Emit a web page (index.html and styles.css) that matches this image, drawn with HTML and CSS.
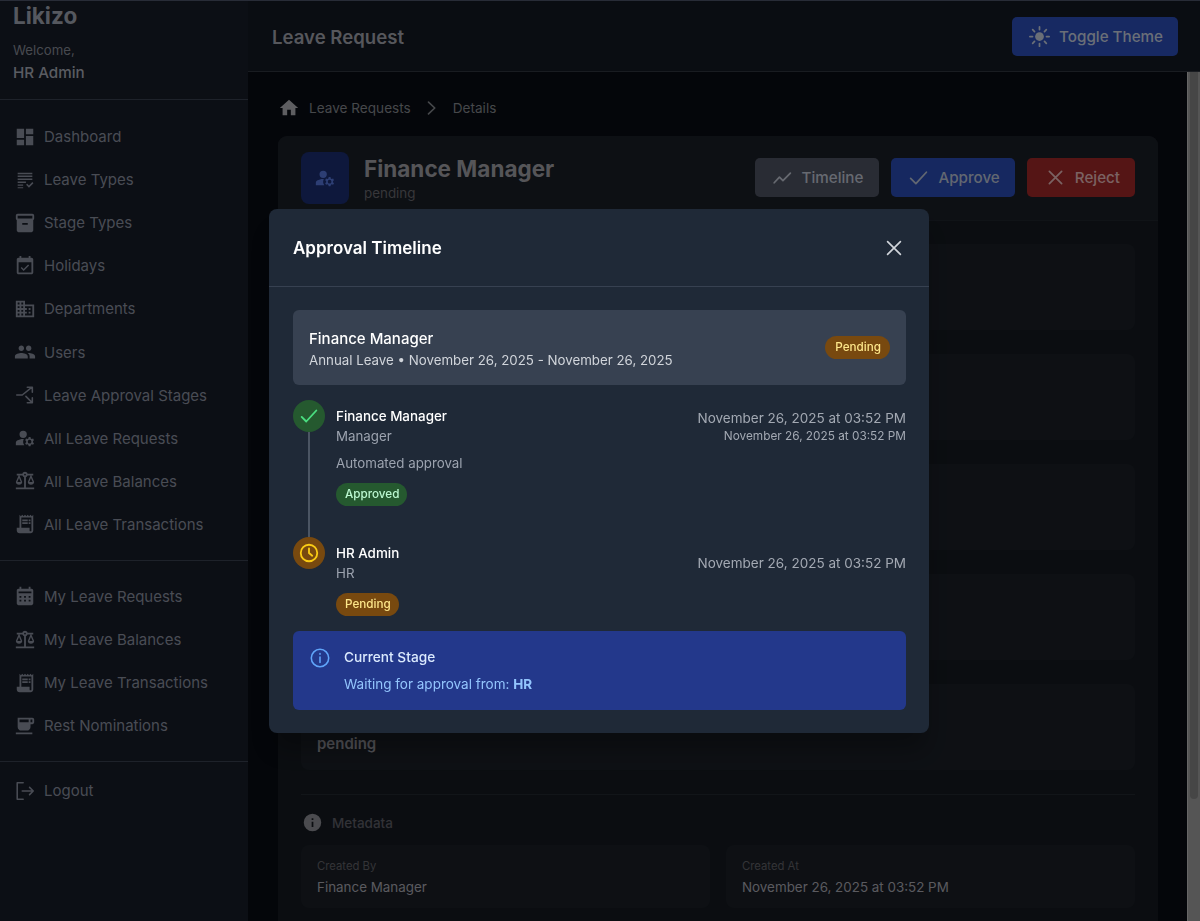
FILE: index.html
```html
<!DOCTYPE html>
<html lang="en">
<head>
<meta charset="utf-8">
<title>Likizo - Leave Request</title>
<link rel="stylesheet" href="styles.css">
</head>
<body>
<div class="app">
  <aside class="sidebar">
    <div class="brand">
      <div class="logo">Likizo</div>
      <div class="welcome">Welcome,</div>
      <div class="who">HR Admin</div>
    </div>
    <nav class="nav-group first">
      <a class="nav"><svg viewBox="0 0 24 24"><path d="M3 13h8V3H3zm0 8h8v-6H3zm10 0h8V11h-8zm0-18v6h8V3z"/></svg>Dashboard</a>
      <a class="nav"><svg viewBox="0 0 24 24"><path d="M4 4h16v1.600H4zm0 3.200h16v1.600H4zm0 3.200h16V12H4zm0 3.200h9v1.600H4zm0 3.200h6v1.600H4zm0 3.100h6V21H4zm9.200-2.600 1.200-1.200 1.900 1.900 3.700-3.700 1.200 1.200-4.900 4.900z"/></svg>Leave Types</a>
      <a class="nav"><svg viewBox="0 0 24 24"><path d="M20 2H4c-1 0-2 .9-2 2v3c0 .7.4 1.400 1 1.700V20c0 1.100 1.100 2 2 2h14c.9 0 2-.9 2-2V8.700c.6-.3 1-1 1-1.700V4c0-1.100-1-2-2-2zm-5 12H9v-2h6zm5-7H4V4h16z"/></svg>Stage Types</a>
      <a class="nav"><svg viewBox="0 0 24 24"><path d="M16.500 11.500 15.400 10.400l-4.900 4.900-2.100-2.100-1.100 1.100 3.200 3.200zM19 3h-1V1h-2v2H8V1H6v2H5c-1.100 0-2 .9-2 2v14c0 1.100.9 2 2 2h14c1.100 0 2-.9 2-2V5c0-1.100-.9-2-2-2zm0 16H5V8h14z"/></svg>Holidays</a>
      <a class="nav"><svg viewBox="0 0 24 24"><path d="M12 7V3H2v18h20V7zM6 19H4v-2h2zm0-4H4v-2h2zm0-4H4V9h2zm0-4H4V5h2zm4 12H8v-2h2zm0-4H8v-2h2zm0-4H8V9h2zm0-4H8V5h2zm10 12h-8v-2h2v-2h-2v-2h2v-2h-2V9h8zm-2-8h-2v2h2zm0 4h-2v2h2z"/></svg>Departments</a>
      <a class="nav"><svg viewBox="0 0 24 24"><path d="M16 11c1.660 0 2.990-1.340 2.990-3S17.660 5 16 5s-3 1.340-3 3 1.340 3 3 3zm-8 0c1.660 0 2.990-1.340 2.990-3S9.660 5 8 5 5 6.340 5 8s1.340 3 3 3zm0 2c-2.330 0-7 1.170-7 3.500V19h14v-2.500C15 14.170 10.330 13 8 13zm8 0c-.290 0-.620.020-.970.050 1.160.840 1.970 1.970 1.970 3.450V19h6v-2.500c0-2.330-4.670-3.500-7-3.500z"/></svg>Users</a>
      <a class="nav"><svg viewBox="0 0 24 24"><path class="line thin" d="M3 12h6l10-8M14.500 3.500H20V9M13 13.500l6.500 6.500M20 15v5.500h-5.500"/></svg>Leave Approval Stages</a>
      <a class="nav"><svg viewBox="0 0 24 24"><path d="M10 4a4 4 0 1 0 0 8 4 4 0 0 0 0-8zM10.700 13.020C10.470 13.010 10.240 13 10 13c-2.420 0-4.680.670-6.610 1.820C2.510 15.340 2 16.320 2 17.350V20h9.260a6.960 6.960 0 0 1-.56-6.980zM20.750 16c0-.220-.030-.420-.060-.630l1.140-1.010-1-1.730-1.450.490c-.320-.270-.680-.480-1.080-.630L18 11h-2l-.300 1.490c-.400.150-.760.360-1.080.630l-1.450-.490-1 1.730 1.140 1.010c-.030.210-.060.410-.060.630s.030.420.060.630l-1.140 1.010 1 1.730 1.450-.490c.320.270.680.480 1.080.630L16 21h2l.300-1.490c.400-.150.760-.360 1.080-.630l1.450.490 1-1.730-1.140-1.010c.030-.210.060-.410.060-.630zM17 18a2 2 0 1 1 0-4 2 2 0 0 1 0 4z"/></svg>All Leave Requests</a>
      <a class="nav"><svg viewBox="0 0 24 24"><path d="M13 7.830c.850-.300 1.530-.980 1.830-1.830H18l-3 7c0 1.660 1.570 3 3.500 3s3.500-1.340 3.500-3l-3-7h2V4h-6.170c-.410-1.170-1.520-2-2.830-2s-2.420.830-2.830 2H3v2h2l-3 7c0 1.660 1.570 3 3.500 3S9 14.660 9 13L6 6h3.170c.300.850.980 1.530 1.830 1.830V19H2v2h20v-2h-9zM20.370 13h-3.740l1.870-4.370zm-13 0H3.630L5.500 8.630zM12 6a1 1 0 1 1 0-2 1 1 0 0 1 0 2z"/></svg>All Leave Balances</a>
      <a class="nav"><svg viewBox="0 0 24 24"><path d="M19.500 3.500 18 2l-1.500 1.500L15 2l-1.500 1.500L12 2l-1.500 1.500L9 2 7.500 3.500 6 2v14H3v3c0 1.660 1.340 3 3 3h12c1.660 0 3-1.340 3-3V2zM19 19c0 .550-.450 1-1 1s-1-.450-1-1v-3H8V5h11zM9 7h6v2H9zm7 0h2v2h-2zm-7 3h6v2H9zm7 0h2v2h-2z"/></svg>All Leave Transactions</a>
    </nav>
    <nav class="nav-group">
      <a class="nav"><svg viewBox="0 0 24 24"><path d="M19 4h-1V2h-2v2H8V2H6v2H5c-1.100 0-2 .9-2 2v14c0 1.100.9 2 2 2h14c1.100 0 2-.9 2-2V6c0-1.100-.9-2-2-2zM8 18H6v-2h2zm0-4H6v-2h2zm5 4h-2v-2h2zm0-4h-2v-2h2zm5 4h-2v-2h2zm0-4h-2v-2h2zm1-5H5V7h14z"/></svg>My Leave Requests</a>
      <a class="nav"><svg viewBox="0 0 24 24"><path d="M13 7.830c.850-.300 1.530-.980 1.830-1.830H18l-3 7c0 1.660 1.570 3 3.500 3s3.500-1.340 3.500-3l-3-7h2V4h-6.170c-.410-1.170-1.520-2-2.830-2s-2.420.830-2.830 2H3v2h2l-3 7c0 1.660 1.570 3 3.500 3S9 14.660 9 13L6 6h3.170c.300.850.980 1.530 1.830 1.830V19H2v2h20v-2h-9zM20.370 13h-3.740l1.870-4.370zm-13 0H3.630L5.500 8.630zM12 6a1 1 0 1 1 0-2 1 1 0 0 1 0 2z"/></svg>My Leave Balances</a>
      <a class="nav"><svg viewBox="0 0 24 24"><path d="M19.500 3.500 18 2l-1.500 1.500L15 2l-1.500 1.500L12 2l-1.500 1.500L9 2 7.500 3.500 6 2v14H3v3c0 1.660 1.340 3 3 3h12c1.660 0 3-1.340 3-3V2zM19 19c0 .550-.450 1-1 1s-1-.450-1-1v-3H8V5h11zM9 7h6v2H9zm7 0h2v2h-2zm-7 3h6v2H9zm7 0h2v2h-2z"/></svg>My Leave Transactions</a>
      <a class="nav"><svg viewBox="0 0 24 24"><path d="M2 21h18v-2H2zM20 3H4v10c0 2.210 1.790 4 4 4h6c2.210 0 4-1.790 4-4v-3h2c1.110 0 2-.9 2-2V5c0-1.110-.89-2-2-2zm0 5h-2V5h2zM6 5h10v3H6z"/></svg>Rest Nominations</a>
    </nav>
    <nav class="nav-group last">
      <a class="nav"><svg viewBox="0 0 24 24"><path class="line thin" d="M10 3H3.500v18H10M9 12h12M17 8l4 4-4 4"/></svg>Logout</a>
    </nav>
  </aside>
  <div class="workspace">
    <header class="topbar">
      <h1 class="page-title">Leave Request</h1>
      <button class="btn btn-theme"><svg viewBox="0 0 24 24"><circle cx="12" cy="12" r="5"/><path class="line" d="M12 1v3M12 20v3M1 12h3M20 12h3M4.200 4.200l2.100 2.100M17.700 17.700l2.100 2.100M4.200 19.800l2.100-2.100M17.700 6.300l2.100-2.100"/></svg>Toggle Theme</button>
    </header>
    <div class="content-row">
      <main class="content">
        <div class="crumbs">
          <svg class="home" viewBox="0 0 24 24"><path d="M10 20v-6h4v6h5v-8h3L12 3 2 12h3v8z"/></svg>
          <span>Leave Requests</span>
          <svg class="chev" viewBox="0 0 24 24"><path class="line" d="m9 5 7.500 7-7.500 7"/></svg>
          <span>Details</span>
        </div>
        <section class="card">
          <div class="card-head">
            <div class="avatar"><svg viewBox="0 0 24 24"><path d="M10 4a4 4 0 1 0 0 8 4 4 0 0 0 0-8zM10.700 13.020C10.470 13.010 10.240 13 10 13c-2.420 0-4.680.670-6.610 1.820C2.510 15.340 2 16.320 2 17.350V20h9.260a6.960 6.960 0 0 1-.56-6.980zM20.750 16c0-.220-.030-.420-.060-.630l1.140-1.010-1-1.730-1.450.490c-.320-.270-.680-.480-1.080-.630L18 11h-2l-.300 1.490c-.400.150-.760.360-1.080.630l-1.450-.490-1 1.730 1.140 1.010c-.030.210-.060.410-.060.630s.030.420.060.630l-1.140 1.010 1 1.730 1.450-.490c.320.270.680.480 1.080.630L16 21h2l.300-1.490c.400-.150.760-.360 1.080-.630l1.450.490 1-1.730-1.140-1.010c.030-.210.060-.410.060-.630zM17 18a2 2 0 1 1 0-4 2 2 0 0 1 0 4z"/></svg></div>
            <div class="head-text">
              <div class="head-name">Finance Manager</div>
              <div class="head-sub">pending</div>
            </div>
            <div class="actions">
              <button class="btn btn-gray"><svg viewBox="0 0 24 24"><path class="line" d="m2.500 18 6-6.500 4 4L21 7"/></svg>Timeline</button>
              <button class="btn btn-blue"><svg viewBox="0 0 24 24"><path class="line" d="m3 13 6 6L21 6"/></svg>Approve</button>
              <button class="btn btn-red"><svg viewBox="0 0 24 24"><path class="line" d="M5 5l14 14M19 5 5 19"/></svg>Reject</button>
            </div>
          </div>
          <div class="card-body">
            <div class="panel"></div>
            <div class="panel"></div>
            <div class="panel"></div>
            <div class="panel"></div>
            <div class="panel status-panel"><span class="status-text">pending</span></div>
            <div class="meta-head">
              <svg viewBox="0 0 24 24"><path d="M12 2a10 10 0 1 0 0 20 10 10 0 0 0 0-20zm1 15h-2v-6h2zm0-8h-2V7h2z"/></svg>Metadata
            </div>
            <div class="meta-grid">
              <div class="meta"><div class="meta-label">Created By</div><div class="meta-value">Finance Manager</div></div>
              <div class="meta"><div class="meta-label">Created At</div><div class="meta-value">November 26, 2025 at 03:52 PM</div></div>
            </div>
          </div>
        </section>
      </main>
      <div class="track"><div class="thumb"></div></div>
    </div>
  </div>
</div>

<div class="backdrop">
  <div class="modal">
    <div class="modal-head">
      <h2>Approval Timeline</h2>
      <svg class="close" viewBox="0 0 24 24"><path class="line" d="M5 5l14 14M19 5 5 19"/></svg>
    </div>
    <div class="modal-body">
      <div class="summary">
        <div>
          <div class="summary-title">Finance Manager</div>
          <div class="summary-sub">Annual Leave • November 26, 2025 - November 26, 2025</div>
        </div>
        <span class="badge badge-amber">Pending</span>
      </div>
      <div class="step step-first">
        <div class="rail">
          <span class="dot dot-green"><svg viewBox="0 0 24 24"><path class="line" d="m4 13 5 5L20 6"/></svg></span>
          <span class="rail-line"></span>
        </div>
        <div class="step-main">
          <div class="step-name">Finance Manager</div>
          <div class="step-role">Manager</div>
          <div class="step-note">Automated approval</div>
          <span class="badge badge-green">Approved</span>
        </div>
        <div class="step-time">
          <div>November 26, 2025 at 03:52 PM</div>
          <div class="time-small">November 26, 2025 at 03:52 PM</div>
        </div>
      </div>
      <div class="step">
        <div class="rail">
          <span class="dot dot-amber"><svg viewBox="0 0 24 24"><circle class="line" cx="12" cy="12" r="9"/><path class="line" d="M12 7v5l3.500 3"/></svg></span>
        </div>
        <div class="step-main">
          <div class="step-name">HR Admin</div>
          <div class="step-role">HR</div>
          <span class="badge badge-amber role-badge">Pending</span>
        </div>
        <div class="step-time step-time-low">
          <div>November 26, 2025 at 03:52 PM</div>
        </div>
      </div>
      <div class="notice">
        <svg viewBox="0 0 24 24"><circle class="line" cx="12" cy="12" r="9.500"/><path class="line" d="M12 11v6M12 7v1"/></svg>
        <div>
          <div class="notice-title">Current Stage</div>
          <div class="notice-text">Waiting for approval from: <strong>HR</strong></div>
        </div>
      </div>
    </div>
  </div>
</div>
</body>
</html>
```

FILE: styles.css
```css
* { box-sizing: border-box; }
html, body { margin: 0; height: 100%; overflow: hidden; }
body { font-family: Inter, "Liberation Sans", sans-serif; font-size: 15px; color: #d1d5db; background: #080c14; }
svg { fill: currentColor; flex: none; }
.line { fill: none; stroke: currentColor; stroke-width: 2; stroke-linecap: round; stroke-linejoin: round; }
.line.thin { stroke-width: 1.700; }

.app { display: flex; height: 921px; }
.sidebar { width: 248px; flex: none; background: #181e2a; display: flex; flex-direction: column; border-top: 1px solid #50586e; }
.brand { height: 99px; padding: 0 13px; border-bottom: 1px solid #3c4454; }
.logo { font-size: 22.500px; font-weight: 700; line-height: 30px; color: #aab0be; }
.welcome { font-size: 13.200px; line-height: 18px; margin-top: 10px; color: #8f939f; }
.who { font-size: 15.200px; line-height: 22px; margin-top: 3px; font-weight: 500; color: #b4b8c4; }
.nav-group { padding: 14px 0; border-bottom: 1px solid #3c4454; display: flex; flex-direction: column; }
.nav-group.first { padding-top: 15px; }
.nav-group.last { padding-top: 7px; border-bottom: 0; }
.nav { display: flex; align-items: center; gap: 8px; height: 43.100px; padding: 0 14px; color: #9298a8; font-size: 15px; }
.nav svg { width: 22px; height: 22px; }

.workspace { flex: 1; min-width: 0; display: flex; flex-direction: column; }
.topbar { height: 72px; flex: none; background: #141a24; border-bottom: 1px solid #323842; border-top: 1px solid #50586e; display: flex; align-items: center; justify-content: space-between; padding: 2px 22px 0 24px; }
.page-title { margin: 0; font-size: 18.600px; font-weight: 600; color: #acaeb8; }
.btn { display: inline-flex; align-items: center; gap: 9px; height: 39px; padding: 0 16px 0 17px; border: 0; border-radius: 5px; font: 500 15.200px Inter, sans-serif; }
.btn svg { width: 21px; height: 21px; }
.btn-blue { background: #2d50c0; color: #c4cee2; padding-right: 15px; }
.btn-gray { background: #525868; color: #cdd3e0; }
.btn-red { background: #aa2a2a; color: #f5c4c4; padding-right: 15px; padding-left: 18px; }
.btn-theme { background: #2f52c4; color: #d4deef; margin-top: -1px; padding-right: 15px; }

.content-row { flex: 1; min-height: 0; display: flex; }
.content { flex: 1; min-width: 0; overflow: hidden; background: #080c14; padding: 0 29px 0 30px; }
.track { width: 13px; flex: none; background: #aaa; border-left: 1px solid #ccc; padding: 0 2px; }
.thumb { height: 727px; background: #8c8c8c; border-radius: 0 0 5px 5px; }
.crumbs { display: flex; align-items: center; height: 64px; padding: 8px 0 0; font-size: 13.600px; color: #8c9096; gap: 9px; }
.home { width: 22px; height: 22px; color: #bcbcc2; }
.chev { width: 20px; height: 20px; margin: 0 2.500px 0 1.500px; }

.card { width: 880px; background: #161b22; border-radius: 9px 9px 0 0; }
.card-head { height: 85px; display: flex; align-items: center; padding: 0 23px; background: #1b2029; border-radius: 9px 9px 0 0; border-bottom: 1px solid #20262f; }
.avatar { width: 48px; height: 52px; border-radius: 8px; background: #1c3078; display: flex; align-items: center; justify-content: center; color: #5a7de8; }
.avatar svg { width: 22px; height: 22px; }
.head-text { margin-left: 15px; }
.head-name { font-size: 22.500px; font-weight: 700; line-height: 28px; color: #aaaab0; }
.head-sub { font-size: 13.400px; line-height: 18px; margin-top: 1px; color: #6e6e74; }
.actions { margin-left: auto; margin-top: -2px; display: flex; gap: 12px; }
.card-body { padding: 23px 23px 100px; }
.panel { height: 86px; background: #1c2129; border-radius: 8px; margin-bottom: 24px; }
.status-panel { padding: 50px 16px 0; }
.status-text { font-size: 15px; font-weight: 600; line-height: 20px; display: block; color: #a0a0aa; }
.meta-head { border-top: 1px solid #242a32; display: flex; align-items: center; gap: 9px; height: 51px; padding: 5px 0 0 1px; font-size: 13.500px; font-weight: 500; color: #64646e; }
.meta-head svg { width: 21px; height: 21px; color: #96969f; }
.meta-grid { display: grid; grid-template-columns: 1fr 1fr; gap: 16px; }
.meta { background: #1c2129; border-radius: 8px; height: 63px; padding: 13px 16px; }
.meta-label { font-size: 11.300px; line-height: 16px; color: #68686f; }
.meta-value { font-size: 13.400px; line-height: 20px; margin-top: 3px; color: #b4b4be; }

.backdrop { position: fixed; inset: 0; background: rgba(0,0,0,.5); display: flex; align-items: center; justify-content: center; padding: 21px 2px 0 0; }
.modal { width: 660px; height: 524px; background: #1f2937; border-radius: 8px; box-shadow: 0 20px 25px -5px rgba(0,0,0,.3); }
.modal-head { height: 78px; display: flex; align-items: center; justify-content: space-between; padding: 0 24px; border-bottom: 1px solid #374151; }
.modal-head h2 { margin: 0; font-size: 17px; font-weight: 600; color: #fff; }
.close { width: 22px; height: 22px; color: #d1d5db; }
.close .line { stroke-width: 1.800; }
.modal-body { padding: 23px 23px 0 24px; }
.summary { height: 75px; background: #374151; border-radius: 6px; display: flex; align-items: center; justify-content: space-between; padding: 2px 16px 0 16px; }
.summary-title { font-size: 15px; font-weight: 500; line-height: 22px; color: #fff; }
.summary-sub { font-size: 13.300px; line-height: 20px; color: #d1d5db; }
.badge { display: inline-block; font-size: 11.700px; font-weight: 500; line-height: 16px; padding: 3px 8px 4px 9px; border-radius: 12px; }
.summary .badge { margin-top: -2px; padding: 3px 9px 4px 10px; }
.badge-amber { background: #78490f; color: #fde68a; }
.badge-green { background: #25592f; color: #bbf7d0; }
.step { display: flex; }
.step-first { margin-top: 15px; height: 137px; }
.rail { width: 32px; flex: none; display: flex; flex-direction: column; align-items: center; margin-right: 11px; }
.dot { width: 32px; height: 32px; border-radius: 50%; display: flex; align-items: center; justify-content: center; flex: none; }
.dot svg { width: 22px; height: 22px; }
.dot-green { background: #25592f; color: #4ade80; }
.dot-amber { background: #78490f; color: #facc15; }
.rail-line { flex: 1; width: 2px; background: #4b5563; }
.step-main { flex: 1; min-width: 0; }
.step-name { font-size: 13.400px; font-weight: 500; line-height: 18px; margin-top: 7px; color: #fff; }
.step-role { font-size: 13.300px; line-height: 20px; margin-top: 1px; color: #9ca3af; }
.step-note { font-size: 13.300px; line-height: 20px; margin-top: 7px; color: #9ca3af; }
.step-first .badge { margin-top: 10px; }
.role-badge { margin-top: 10px; }
.step-time { text-align: right; font-size: 13.500px; line-height: 18px; color: #a3a9b3; padding-top: 9px; }
.step-time-low { padding-top: 17px; }
.time-small { font-size: 11.800px; line-height: 14px; margin-top: 2px; }
.notice { margin-top: 15px; height: 79px; background: #23388b; border-radius: 6px; display: flex; gap: 13px; padding: 17px 16px; color: #93c5fd; }
.notice > svg { width: 22px; height: 22px; margin-top: -1px; color: #60a5fa; }
.notice > svg .line { stroke-width: 1.700; }
.notice-title { font-size: 13.700px; font-weight: 500; line-height: 18px; color: #dbeafe; }
.notice-text { font-size: 13.500px; line-height: 20px; margin-top: 8px; }
```
